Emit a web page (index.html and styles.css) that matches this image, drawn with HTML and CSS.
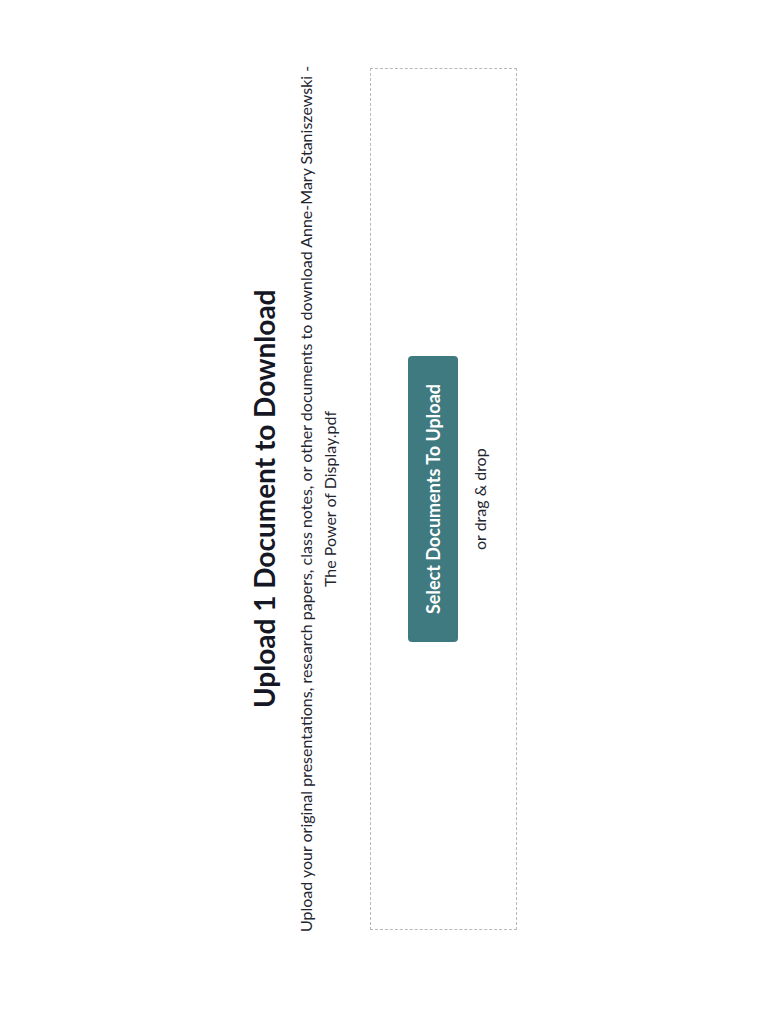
FILE: index.html
```html
<!DOCTYPE html>
<html>
<head>
<meta charset="utf-8">
<link rel="stylesheet" href="styles.css">
</head>
<body>
<div class="page">
  <div class="inner">
    <h1 class="title">Upload 1 Document to Download</h1>
    <p class="desc">Upload your original presentations, research papers, class notes, or other documents to download Anne-Mary Staniszewski - The Power of Display.pdf</p>
    <div class="drop">
      <div class="btn" role="button">Select Documents To Upload</div>
      <div class="hint">or drag &amp; drop</div>
    </div>
  </div>
</div>
</body>
</html>
```

FILE: styles.css
```css
html, body {
  margin: 0;
  padding: 0;
  background: #ffffff;
  overflow: hidden;
  width: 768px;
  height: 1024px;
}
.page {
  writing-mode: vertical-rl;
  transform: rotate(180deg);
  width: 768px;
  height: 1024px;
  box-sizing: border-box;
  padding-inline-start: 26px;
  padding-block-start: 244px;
  font-family: "Lato", "Liberation Sans", sans-serif;
}
.inner {
  inline-size: 880px;
  margin-inline: auto;
  display: flex;
  flex-direction: column;
  align-items: center;
}
.title {
  margin: 0;
  font-size: 28px;
  line-height: 40px;
  font-weight: 700;
  color: #161725;
  text-align: center;
}
.desc {
  margin: 0;
  margin-block-start: 10px;
  font-size: 16px;
  line-height: 24px;
  color: #23252f;
  text-align: center;
}
.drop {
  margin-block-start: 28px;
  inline-size: 862px;
  block-size: 147px;
  box-sizing: border-box;
  border: 1px dashed #b8b8b8;
  display: flex;
  flex-direction: column;
  align-items: center;
  padding-block-start: 37px;
}
.btn {
  inline-size: 286px;
  block-size: 50px;
  border-radius: 4px;
  background: #3f7a80;
  color: #ffffff;
  font-size: 18px;
  font-weight: 700;
  display: flex;
  align-items: center;
  justify-content: center;
}
.hint {
  margin-block-start: 12px;
  font-size: 16px;
  line-height: 20px;
  color: #23252f;
}
```
